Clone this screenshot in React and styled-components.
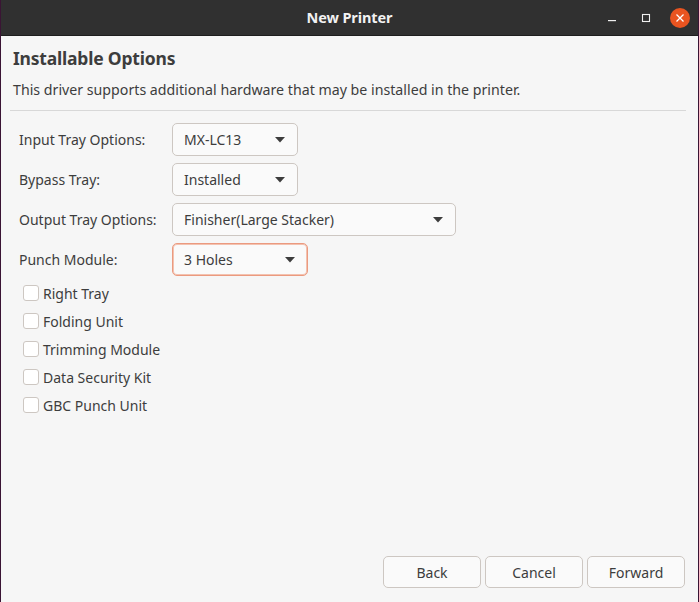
import React from "react";
import styled, { createGlobalStyle } from "styled-components";

const GlobalStyle = createGlobalStyle`
  html, body {
    margin: 0;
    padding: 0;
    background: #2c0f27;
  }
  * {
    box-sizing: border-box;
  }
`;

const FONT = `"Noto Sans", "Open Sans", sans-serif`;

const Window = styled.div`
  width: 699px;
  height: 602px;
  display: flex;
  flex-direction: column;
  border-left: 1px solid #3a1434;
  border-right: 1px solid #3a1434;
  background: #f6f6f6;
  font-family: ${FONT};
  color: #3d3d3d;
  overflow: hidden;
`;

const TitleBar = styled.div`
  position: relative;
  height: 36px;
  flex: 0 0 36px;
  padding-bottom: 2px;
  background: #303030;
  border-bottom: 1px solid #1e1e1e;
  display: flex;
  align-items: center;
  justify-content: center;
`;

const TitleText = styled.div`
  font-size: 14.5px;
  font-weight: 700;
  color: #f2f2f2;
  letter-spacing: -0.1px;
`;

const Controls = styled.div`
  position: absolute;
  right: 8px;
  top: 0;
  height: 35px;
  display: flex;
  align-items: center;
  gap: 14px;
`;

const CtrlButton = styled.div`
  width: 20px;
  height: 20px;
  display: flex;
  align-items: center;
  justify-content: center;
  border-radius: 50%;
  background: ${(p) => (p.$close ? "#e95420" : "transparent")};
`;

const Content = styled.div`
  flex: 1;
  display: flex;
  flex-direction: column;
  padding: 0 12px 14px 12px;
`;

const Heading = styled.h1`
  margin: 11px 0 0 0;
  font-size: 17.5px;
  font-weight: 700;
  line-height: 22px;
  letter-spacing: -0.2px;
`;

const Description = styled.p`
  margin: 11px 0 0 0;
  font-size: 14.2px;
  line-height: 20px;
`;

const Separator = styled.hr`
  margin: 10px 0 0 -3px;
  border: none;
  border-top: 1px solid #d8d8d8;
  height: 0;
`;

const Form = styled.div`
  display: grid;
  grid-template-columns: 153px auto;
  grid-auto-rows: 33px;
  row-gap: 7px;
  align-items: center;
  justify-items: start;
  margin: 12px 0 0 6px;
`;

const Label = styled.span`
  font-size: 14px;
`;

const Combo = styled.div`
  width: ${(p) => p.$width}px;
  height: 33px;
  display: flex;
  align-items: center;
  justify-content: space-between;
  padding: 0 12px 0 11px;
  background: #fafafa;
  border: 1px solid ${(p) => (p.$focused ? "#eb9a7f" : "#cdc7c2")};
  box-shadow: ${(p) => (p.$focused ? "inset 0 0 0 1px #f3c2b0" : "none")};
  border-radius: 5px;
  font-size: 14px;
`;

const Checks = styled.div`
  display: flex;
  flex-direction: column;
  gap: 12px;
  margin: 9px 0 0 10px;
`;

const CheckRow = styled.label`
  display: flex;
  align-items: center;
  gap: 4px;
  font-size: 14px;
  height: 16px;
`;

const CheckBox = styled.span`
  width: 16px;
  height: 16px;
  border: 1px solid #cdc7c2;
  border-radius: 3px;
  background: #ffffff;
`;

const Footer = styled.div`
  margin-top: auto;
  display: flex;
  justify-content: flex-end;
  gap: 4px;
  padding-right: 1px;
`;

const Button = styled.button`
  width: 98px;
  height: 32px;
  border: 1px solid #cdc7c2;
  border-radius: 5px;
  background: #fafafa;
  font-family: ${FONT};
  font-size: 14px;
  color: #3d3d3d;
  padding: 0;
`;

const Arrow = () => (
  <svg width="10" height="6" viewBox="0 0 10 6">
    <path d="M0 0 L10 0 L5 5.5 Z" fill="#3d3d3d" />
  </svg>
);

const rows = [
  { label: "Input Tray Options:", value: "MX-LC13", width: 126 },
  { label: "Bypass Tray:", value: "Installed", width: 126 },
  { label: "Output Tray Options:", value: "Finisher(Large Stacker)", width: 284 },
  { label: "Punch Module:", value: "3 Holes", width: 136, focused: true },
];

const checks = [
  "Right Tray",
  "Folding Unit",
  "Trimming Module",
  "Data Security Kit",
  "GBC Punch Unit",
];

export default function App() {
  return (
    <>
      <GlobalStyle />
      <Window>
        <TitleBar>
          <TitleText>New Printer</TitleText>
          <Controls>
            <CtrlButton>
              <svg width="10" height="10" viewBox="0 0 10 10">
                <rect x="1" y="7" width="8" height="1.2" fill="#f0f0f0" />
              </svg>
            </CtrlButton>
            <CtrlButton>
              <svg width="10" height="10" viewBox="0 0 10 10">
                <rect x="1.5" y="1.5" width="7" height="7" fill="none" stroke="#f0f0f0" strokeWidth="1.1" />
              </svg>
            </CtrlButton>
            <CtrlButton $close>
              <svg width="10" height="10" viewBox="0 0 10 10">
                <path d="M1.5 1.5 L8.5 8.5 M8.5 1.5 L1.5 8.5" stroke="#ffffff" strokeWidth="1.3" />
              </svg>
            </CtrlButton>
          </Controls>
        </TitleBar>
        <Content>
          <Heading>Installable Options</Heading>
          <Description>
            This driver supports additional hardware that may be installed in the printer.
          </Description>
          <Separator />
          <Form>
            {rows.map((r) => (
              <React.Fragment key={r.label}>
                <Label>{r.label}</Label>
                <Combo $width={r.width} $focused={r.focused}>
                  <span>{r.value}</span>
                  <Arrow />
                </Combo>
              </React.Fragment>
            ))}
          </Form>
          <Checks>
            {checks.map((c) => (
              <CheckRow key={c}>
                <CheckBox />
                {c}
              </CheckRow>
            ))}
          </Checks>
          <Footer>
            <Button>Back</Button>
            <Button>Cancel</Button>
            <Button>Forward</Button>
          </Footer>
        </Content>
      </Window>
    </>
  );
}
